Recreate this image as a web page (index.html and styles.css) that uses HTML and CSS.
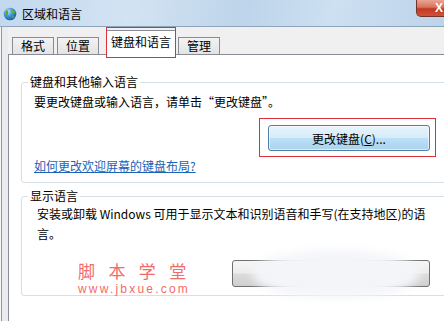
FILE: index.html
```html
<!DOCTYPE html>
<html lang="zh-CN">
<head>
<meta charset="utf-8">
<title>区域和语言</title>
<link rel="stylesheet" href="styles.css">
</head>
<body>
<div class="window">
  <div class="titlebar">
    <svg class="app-icon" viewBox="0 0 14 14" width="14" height="14">
      <defs>
        <radialGradient id="sea" cx="0.35" cy="0.3" r="0.8">
          <stop offset="0" stop-color="#bfe3ff"/>
          <stop offset="0.5" stop-color="#3b8fd8"/>
          <stop offset="1" stop-color="#1a4f9a"/>
        </radialGradient>
      </defs>
      <circle cx="7" cy="7" r="6.3" fill="url(#sea)"/>
      <path d="M3 3.5 C5 3 6 4.5 5 6 C4.2 7.2 5.5 8.5 4.5 10 C3 9 1.8 6 3 3.5Z" fill="#4fa83a"/>
      <path d="M8 2.2 C10 2.5 12 4 12.3 6 C11 6.5 10 5.5 9 6.5 C8 5.5 7.5 4 8 2.2Z" fill="#5cb840"/>
      <path d="M8.5 8.5 C10 8 11.5 9 11 10.5 C10 11.8 8.5 11.5 8.5 8.5Z" fill="#4fa83a"/>
    </svg>
    <span class="title">区域和语言</span>
    <div class="close"><span>X</span></div>
  </div>
  <div class="content">
    <div class="tabs">
      <div class="tab">格式</div>
      <div class="tab">位置</div>
      <div class="tab active">键盘和语言</div>
      <div class="tab">管理</div>
    </div>
    <div class="panel">
      <fieldset class="group g1">
        <legend>键盘和其他输入语言</legend>
        <div class="group-body">
          <p class="desc">要更改键盘或输入语言，请单击“更改键盘”。</p>
          <span class="marked"><button class="btn btn-blue">更改键盘(<u>C</u>)...</button></span>
          <a class="link" href="#">如何更改欢迎屏幕的键盘布局?</a>
        </div>
      </fieldset>
      <fieldset class="group g2">
        <legend>显示语言</legend>
        <div class="group-body wide">
          <p class="desc2">安装或卸载 Windows 可用于显示文本和识别语音和手写(在支持地区)的语言。</p>
          <button class="btn btn-gray"></button>
        </div>
      </fieldset>
    </div>
  </div>
  <div class="blob"></div>
  <div class="watermark">
    <div class="wm-cn">脚 本 学 堂</div>
    <div class="wm-url">www.jbxue.com</div>
  </div>
</div>
</body>
</html>
```

FILE: styles.css
```css
body {
  margin: 0;
  width: 444px;
  height: 321px;
  overflow: hidden;
  font-family: "Noto Sans CJK SC", "Liberation Sans", sans-serif;
  font-size: 12px;
  color: #000;
}

.window {
  position: relative;
  width: 444px;
  height: 321px;
  overflow: hidden;
  background: #f0f0f0;
}

.titlebar {
  display: flex;
  align-items: center;
  height: 26px;
  padding-left: 3px;
  border-bottom: 1px solid #8fa3b9;
  background: linear-gradient(100deg, #c3d8ee 0%, #d2e3f3 30%, #bdd4ea 55%, #cde0f2 75%, #bcd3ea 100%);
}

.app-icon {
  flex-shrink: 0;
  margin-top: 2px;
}

.title {
  margin-left: 5px;
  line-height: 16px;
  margin-top: 2px;
}

.close {
  flex-shrink: 0;
  align-self: flex-start;
  margin-left: auto;
  margin-right: -18px;
  width: 46px;
  height: 17px;
  box-sizing: border-box;
  border: 1px solid #70342b;
  border-top: none;
  border-radius: 0 0 5px 5px;
  background: linear-gradient(#e9a594 0%, #d8735c 45%, #c3381f 55%, #d0523a 100%);
  color: #fff;
  font-family: "Liberation Sans", sans-serif;
  font-weight: bold;
  font-size: 12px;
  display: flex;
  justify-content: center;
  align-items: center;
}

.content {
  height: 294px;
  padding-left: 8px;
  background: linear-gradient(to right, #f6f6f6 0 1px, #7f9bba 1px 2px, #e9ebee 2px 8px, #f0f0f0 8px);
}

.tabs {
  display: flex;
  align-items: flex-end;
  height: 27px;
  padding-left: 4px;
}

.tab {
  height: 16px;
  line-height: 16px;
  padding: 0 8px;
  border: 1px solid #898c95;
  border-bottom: none;
  background: linear-gradient(#f3f3f3, #e3e3e3);
  margin-right: 3px;
}

.tab.active {
  position: relative;
  z-index: 1;
  height: 24px;
  line-height: 22px;
  padding: 0 4px;
  margin-left: 4px;
  margin-right: 2px;
  margin-bottom: -1px;
  background: #fff;
}

.tab.active::after {
  content: "";
  position: absolute;
  left: -1px;
  right: -1px;
  top: -4px;
  bottom: -3px;
  border: 1px solid #d9303a;
}

.panel {
  height: 300px;
  background: #fff;
  border-top: 1px solid #898c95;
  border-left: 1px solid #898c95;
  padding-left: 12px;
}

.group {
  margin: 0;
  padding: 0;
  width: 460px;
  border: 1px solid #d5dfe5;
  border-radius: 3px;
}

.group legend {
  margin-left: 6px;
  padding: 0 2px;
  line-height: 16px;
}

.g1 {
  margin-top: 19px;
}

.g2 {
  margin-top: 5px;
}

.group-body {
  display: flex;
  flex-direction: column;
  align-items: flex-start;
  padding: 0 0 8px 12px;
}

.group-body.wide {
  padding-left: 15px;
}

.desc {
  margin: 4px 0 0;
  line-height: 16px;
}

.desc2 {
  margin: 0;
  width: 393px;
  line-height: 20px;
}

.btn {
  font-family: "Noto Sans CJK SC", "Liberation Sans", sans-serif;
  font-size: 12px;
  color: #000;
  padding: 0;
  border-radius: 3px;
}

.marked {
  position: relative;
  display: block;
  margin: 15px 0 0 234px;
}

.marked::after {
  content: "";
  position: absolute;
  left: -9px;
  right: -6px;
  top: -7px;
  bottom: -6px;
  border: 1px solid #d9303a;
}

.btn-blue {
  display: block;
  width: 162px;
  height: 26px;
  border: 1px solid #4f7fa8;
  background: linear-gradient(#e8f4fc 0%, #d6ecfa 48%, #bcdff5 52%, #a9d3ef 100%);
  box-shadow: inset 0 0 0 1px rgba(255, 255, 255, 0.6);
}

.btn-gray {
  margin: 16px 0 0 195px;
  width: 198px;
  height: 27px;
  border: 1px solid #707070;
  background: linear-gradient(#f6f6f6 0%, #ececec 48%, #dcdcdc 52%, #cfcfcf 100%);
}

.link {
  margin-top: 7px;
  line-height: 16px;
  color: #1c63b7;
  text-decoration: underline;
}

.blob {
  position: absolute;
  left: 252px;
  top: 250px;
  width: 168px;
  height: 48px;
  border-radius: 50%;
  background: #f4f5f9;
  filter: blur(5px);
}

.watermark {
  position: absolute;
  left: 78px;
  top: 260px;
  color: #f26b6b;
}

.wm-cn {
  font-size: 17px;
  line-height: 22px;
  letter-spacing: 4.8px;
  white-space: pre;
}

.wm-url {
  font-family: "Liberation Sans", sans-serif;
  font-size: 12px;
  line-height: 14px;
  letter-spacing: 2.2px;
}
```
